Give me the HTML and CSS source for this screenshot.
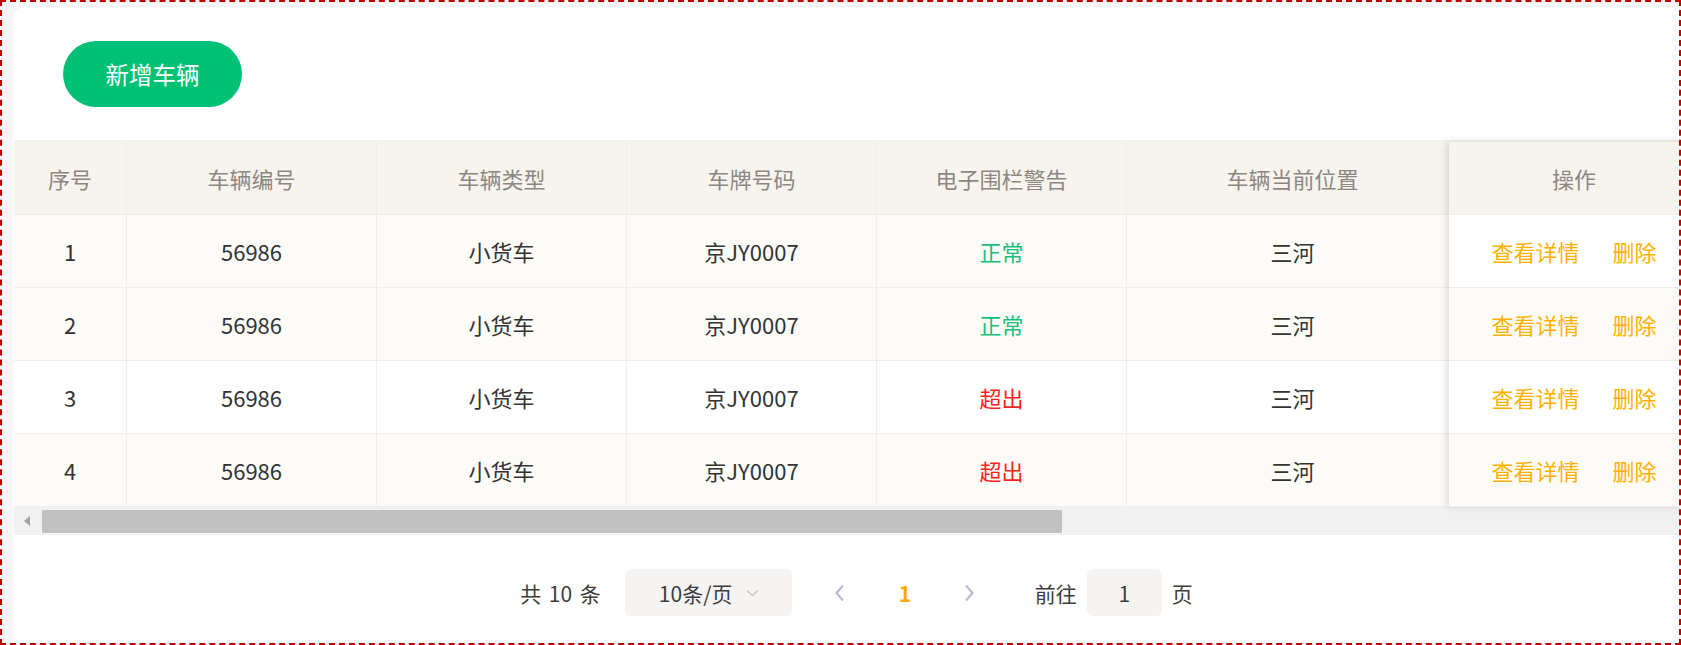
FILE: index.html
```html
<!DOCTYPE html>
<html lang="zh-CN">
<head>
<meta charset="utf-8">
<title>车辆管理</title>
<link rel="stylesheet" href="styles.css">
</head>
<body>
<div class="frame">
  <div class="card">
    <div class="toolbar">
      <button class="btn-add" type="button">新增车辆</button>
    </div>

    <div class="table">
      <div class="table-grid">
        <div class="main">
          <div class="row head">
            <div class="cell c-idx">序号</div>
            <div class="cell c-w">车辆编号</div>
            <div class="cell c-w">车辆类型</div>
            <div class="cell c-w">车牌号码</div>
            <div class="cell c-w">电子围栏警告</div>
            <div class="cell c-loc">车辆当前位置</div>
          </div>
          <div class="row tint">
            <div class="cell c-idx">1</div>
            <div class="cell c-w">56986</div>
            <div class="cell c-w">小货车</div>
            <div class="cell c-w">京JY0007</div>
            <div class="cell c-w ok">正常</div>
            <div class="cell c-loc">三河</div>
          </div>
          <div class="row tint">
            <div class="cell c-idx">2</div>
            <div class="cell c-w">56986</div>
            <div class="cell c-w">小货车</div>
            <div class="cell c-w">京JY0007</div>
            <div class="cell c-w ok">正常</div>
            <div class="cell c-loc">三河</div>
          </div>
          <div class="row">
            <div class="cell c-idx">3</div>
            <div class="cell c-w">56986</div>
            <div class="cell c-w">小货车</div>
            <div class="cell c-w">京JY0007</div>
            <div class="cell c-w bad">超出</div>
            <div class="cell c-loc">三河</div>
          </div>
          <div class="row tint">
            <div class="cell c-idx">4</div>
            <div class="cell c-w">56986</div>
            <div class="cell c-w">小货车</div>
            <div class="cell c-w">京JY0007</div>
            <div class="cell c-w bad">超出</div>
            <div class="cell c-loc">三河</div>
          </div>
        </div>

        <div class="fixed">
          <div class="row head"><div class="cell c-op">操作</div></div>
          <div class="row"><div class="cell c-op"><a class="link">查看详情</a><a class="link">删除</a></div></div>
          <div class="row tint"><div class="cell c-op"><a class="link">查看详情</a><a class="link">删除</a></div></div>
          <div class="row"><div class="cell c-op"><a class="link">查看详情</a><a class="link">删除</a></div></div>
          <div class="row tint"><div class="cell c-op"><a class="link">查看详情</a><a class="link">删除</a></div></div>
        </div>
      </div>

      <div class="hscroll">
        <span class="hs-arrow"></span>
        <span class="hs-thumb"></span>
      </div>
    </div>

    <div class="pager">
      <span class="total">共 10 条</span>
      <div class="sizes">
        <span>10条/页</span>
        <svg class="chev" width="13" height="8" viewBox="0 0 13 8"><path d="M1 1.5 L6.5 6.5 L12 1.5" fill="none" stroke="#c0c4cc" stroke-width="1.4"/></svg>
      </div>
      <div class="pg-btns">
        <span class="pg-btn"><svg width="11" height="18" viewBox="0 0 11 18"><path d="M9 1.5 L2.5 9 L9 16.5" fill="none" stroke="#b8bfcc" stroke-width="2.2"/></svg></span>
        <span class="pg-btn num">1</span>
        <span class="pg-btn"><svg width="11" height="18" viewBox="0 0 11 18"><path d="M2 1.5 L8.5 9 L2 16.5" fill="none" stroke="#b8bfcc" stroke-width="2.2"/></svg></span>
      </div>
      <div class="jump">
        <span>前往</span>
        <span class="jump-input">1</span>
        <span>页</span>
      </div>
    </div>
  </div>
</div>
</body>
</html>
```

FILE: styles.css
```css
* { box-sizing: border-box; }

html, body {
  margin: 0;
  padding: 0;
  background: #ffffff;
}

body {
  font-family: "Noto Sans CJK SC", "Noto Sans", "Liberation Sans", sans-serif;
  color: #333333;
}

.frame {
  width: 1681px;
  height: 645px;
  border: 2px dashed #bf0000;
  background: #f6f6f6;
  overflow: hidden;
  padding: 5px 0 0 11px;
  display: flex;
}

.card {
  flex: 0 0 1687px;
  width: 1687px;
  background: #ffffff;
  border-top-left-radius: 12px;
  display: flex;
  flex-direction: column;
}

.toolbar {
  height: 133px;
  padding: 34px 0 0 50px;
}

.btn-add {
  width: 179px;
  height: 66px;
  border: none;
  border-radius: 33px;
  background: #00c176;
  color: #ffffff;
  font-family: "Noto Sans CJK SC", sans-serif;
  font-size: 23.5px;
  padding: 0;
  cursor: pointer;
}

.table {
  margin: 0 1px;
  border-top: 2px solid #f4f2ee;
}

.table-grid {
  display: flex;
}

.main {
  width: 1435px;
  flex: 0 0 1435px;
  overflow: hidden;
}

.fixed {
  flex: 0 0 250px;
  width: 250px;
  position: relative;
  z-index: 2;
  box-shadow: -3px 0 7px rgba(0, 0, 0, 0.13);
  background: #ffffff;
}

.row {
  display: flex;
  height: 73px;
  border-bottom: 1px solid #f1ede8;
  background: #ffffff;
  width: max-content;
}

.fixed .row { width: 250px; }

.row.tint { background: #fcfbf8; }

.row.head {
  background: #f7f4ee;
  color: #8d8784;
}

.cell {
  flex: 0 0 auto;
  display: flex;
  align-items: center;
  justify-content: center;
  font-size: 22px;
  border-right: 1px solid #f1ede8;
  white-space: nowrap;
}

.c-idx { width: 113px; }
.c-w { width: 250px; }
.c-loc { width: 332px; }
.c-op { width: 250px; border-right: none; gap: 33px; }

.ok { color: #16c07a; }
.bad { color: #ff1f1f; }

.link {
  color: #ffb100;
  cursor: pointer;
}

.hscroll {
  height: 28px;
  background: #f1f1f1;
  display: flex;
  align-items: center;
  padding-left: 10px;
}

.hs-arrow {
  width: 0;
  height: 0;
  border-top: 5px solid transparent;
  border-bottom: 5px solid transparent;
  border-right: 6px solid #a3a3a3;
  margin-right: 12px;
}

.hs-thumb {
  width: 1020px;
  height: 23px;
  background: #c1c1c1;
}

.pager {
  margin-top: 34px;
  height: 47px;
  display: flex;
  align-items: center;
  justify-content: center;
  font-size: 21px;
  color: #3d3d3d;
}

.total {
  margin-right: 24px;
  word-spacing: 3px;
}

.sizes {
  width: 167px;
  height: 47px;
  background: #f5f4f3;
  border-radius: 6px;
  display: flex;
  align-items: center;
  padding-left: 34px;
  gap: 14px;
}

.pg-btns {
  display: flex;
  align-items: center;
  gap: 19px;
  margin-left: 25px;
}

.pg-btn {
  width: 46px;
  height: 47px;
  display: flex;
  align-items: center;
  justify-content: center;
}

.pg-btn.num {
  color: #ffa800;
  font-weight: 700;
}

.jump {
  display: flex;
  align-items: center;
  margin-left: 42px;
  gap: 10px;
}

.jump-input {
  width: 75px;
  height: 47px;
  background: #f5f4f3;
  border-radius: 6px;
  display: flex;
  align-items: center;
  justify-content: center;
}
```
